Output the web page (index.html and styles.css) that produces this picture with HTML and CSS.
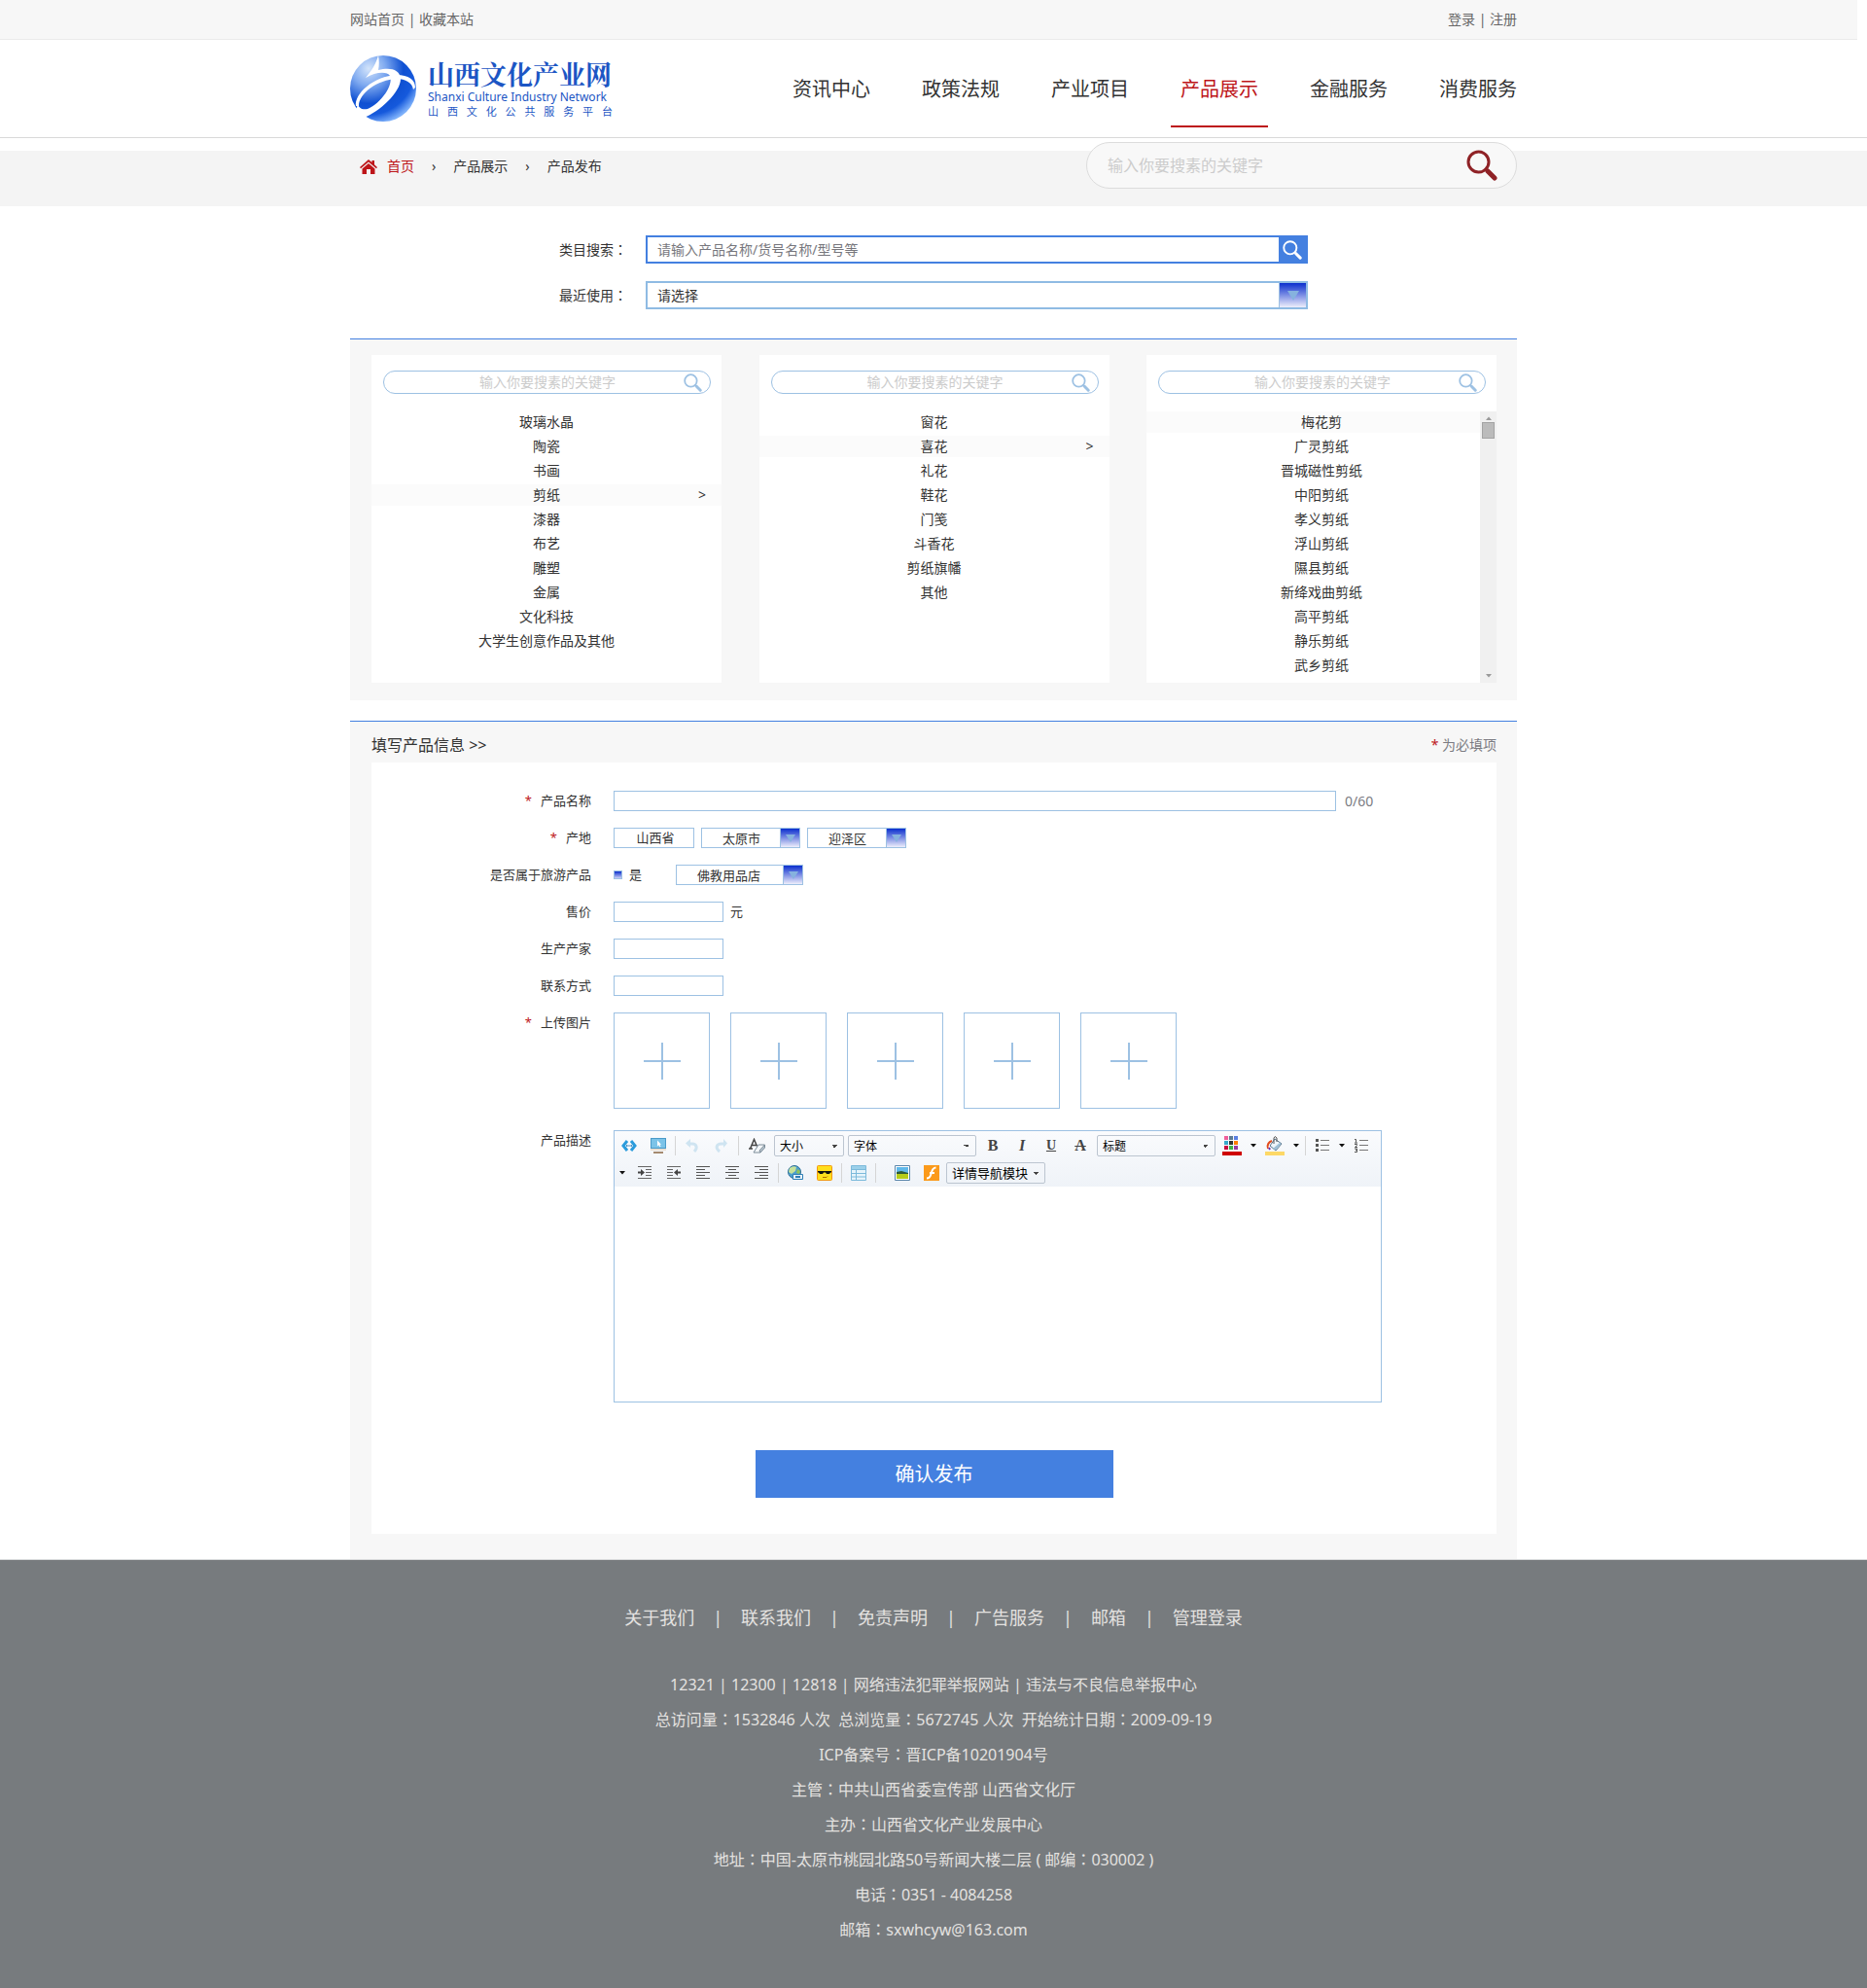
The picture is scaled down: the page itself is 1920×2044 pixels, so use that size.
FILE: index.html
```html
<!DOCTYPE html>
<html lang="zh-CN">
<head>
<meta charset="utf-8">
<meta name="viewport" content="width=device-width, initial-scale=1">
<title>产品发布 - 山西文化产业网</title>
<link rel="stylesheet" href="styles.css">
</head>
<body>
<svg width="0" height="0" class="sprite" aria-hidden="true">
  <symbol id="search" viewBox="0 0 32 32">
    <circle cx="12.500" cy="12.500" r="10.500" fill="none" stroke="currentColor" stroke-width="3"/>
    <path d="M22 22l7 7" stroke="currentColor" stroke-width="5" stroke-linecap="round"/>
    <path d="M19.500 19.500l3 3" stroke="currentColor" stroke-width="2"/>
  </symbol>
  <symbol id="caret" viewBox="0 0 6 4"><path d="M0 0h6L3 3.500z" fill="currentColor"/></symbol>
</svg>

<div class="topbar">
  <div class="container topbar-inner">
    <div><a href="#">网站首页</a> | <a href="#">收藏本站</a></div>
    <div><a href="#">登录</a> | <a href="#">注册</a></div>
  </div>
</div>

<header class="header">
  <div class="container header-inner">
    <a class="logo" href="#">
      <svg width="68" height="68" viewBox="0 0 68 68" aria-hidden="true">
        <defs>
          <radialGradient id="ball" cx="0.28" cy="0.2" r="0.85">
            <stop offset="0" stop-color="#d3e4fb"/>
            <stop offset="0.3" stop-color="#7faaf0"/>
            <stop offset="0.62" stop-color="#0f50d2"/>
            <stop offset="0.82" stop-color="#1559dc"/>
            <stop offset="1" stop-color="#7db0fa"/>
          </radialGradient>
        </defs>
        <circle cx="34" cy="34" r="34" fill="url(#ball)"/>
        <path d="M29 0C27 8 22 16 16 23C26 17 38 16 41 21C45 30 32 49 18 55C12 56 9 54 8 50C5 57 8 61 14 64C30 58 52 38 52 24C51 14 41 12 29 15C30 10 30 5 29 0Z" fill="#fff"/>
        <path d="M6 52C4 40 24 21 48 20C60 20 67 25 67 33L65 35C64 28 57 24 48 24C28 25 9 39 9 52Z" fill="#fff"/>
      </svg>
      <span class="logo-text">
        <strong>山西文化产业网</strong>
        <span class="logo-en">Shanxi Culture Industry Network</span>
        <span class="logo-sub">山西文化公共服务平台</span>
      </span>
    </a>
    <nav class="nav">
      <a href="#">资讯中心</a>
      <a href="#">政策法规</a>
      <a href="#">产业项目</a>
      <a href="#" class="active" aria-current="page">产品展示</a>
      <a href="#">金融服务</a>
      <a href="#">消费服务</a>
    </nav>
  </div>
</header>

<div class="crumbbar">
  <div class="container crumbbar-inner">
    <nav class="crumbs" aria-label="面包屑">
      <a href="#" class="home">
        <svg width="18" height="15" viewBox="0 0 18 15" aria-hidden="true"><path d="M9 0l3.500 3V1H15v4.300l3 2.700-1 1.200L9 2.400 1 9.200 0 8z" fill="currentColor"/><path d="M9 4l6.500 5.500V15h-4.500v-5H7v5H2.500V9.500z" fill="currentColor"/></svg>
        首页</a>
      <span>›</span>
      <a href="#">产品展示</a>
      <span>›</span>
      <a href="#">产品发布</a>
    </nav>
    <form class="site-search">
      <input type="text" placeholder="输入你要搜素的关键字" aria-label="站内搜索">
      <button type="button" aria-label="搜索"><svg width="32" height="32"><use href="#search"/></svg></button>
    </form>
  </div>
</div>

<main class="container">
  <form class="lookup">
    <div class="lookup-row">
      <label for="kw">类目搜索<span class="colon" lang="zh-TW">：</span></label>
      <div class="lookup-box strong">
        <input id="kw" type="text" placeholder="请输入产品名称/货号名称/型号等">
        <button type="button" aria-label="搜索"><svg width="20" height="20"><use href="#search"/></svg></button>
      </div>
    </div>
    <div class="lookup-row">
      <label for="recent">最近使用<span class="colon" lang="zh-TW">：</span></label>
      <div class="lookup-box drop">
        <select id="recent"><option>请选择</option></select>
      </div>
    </div>
  </form>

  <section class="picker">
    <div class="col">
      <div class="col-search">
        <input type="text" placeholder="输入你要搜素的关键字" aria-label="搜索一级类目">
        <button type="button" aria-label="搜索"><svg width="19" height="19"><use href="#search"/></svg></button>
      </div>
      <ul>
        <li><a href="#">玻璃水晶</a></li>
        <li><a href="#">陶瓷</a></li>
        <li><a href="#">书画</a></li>
        <li class="on"><a href="#">剪纸</a><span class="more">&gt;</span></li>
        <li><a href="#">漆器</a></li>
        <li><a href="#">布艺</a></li>
        <li><a href="#">雕塑</a></li>
        <li><a href="#">金属</a></li>
        <li><a href="#">文化科技</a></li>
        <li><a href="#">大学生创意作品及其他</a></li>
      </ul>
    </div>
    <div class="col">
      <div class="col-search">
        <input type="text" placeholder="输入你要搜素的关键字" aria-label="搜索二级类目">
        <button type="button" aria-label="搜索"><svg width="19" height="19"><use href="#search"/></svg></button>
      </div>
      <ul>
        <li><a href="#">窗花</a></li>
        <li class="on"><a href="#">喜花</a><span class="more">&gt;</span></li>
        <li><a href="#">礼花</a></li>
        <li><a href="#">鞋花</a></li>
        <li><a href="#">门笺</a></li>
        <li><a href="#">斗香花</a></li>
        <li><a href="#">剪纸旗幡</a></li>
        <li><a href="#">其他</a></li>
      </ul>
    </div>
    <div class="col">
      <div class="col-search">
        <input type="text" placeholder="输入你要搜素的关键字" aria-label="搜索三级类目">
        <button type="button" aria-label="搜索"><svg width="19" height="19"><use href="#search"/></svg></button>
      </div>
      <ul class="scrolled">
        <li class="on"><a href="#">梅花剪</a></li>
        <li><a href="#">广灵剪纸</a></li>
        <li><a href="#">晋城磁性剪纸</a></li>
        <li><a href="#">中阳剪纸</a></li>
        <li><a href="#">孝义剪纸</a></li>
        <li><a href="#">浮山剪纸</a></li>
        <li><a href="#">隰县剪纸</a></li>
        <li><a href="#">新绛戏曲剪纸</a></li>
        <li><a href="#">高平剪纸</a></li>
        <li><a href="#">静乐剪纸</a></li>
        <li><a href="#">武乡剪纸</a></li>
        <li class="scrollbar" aria-hidden="true">
          <svg class="up" width="6" height="4"><use href="#caret"/></svg>
          <i></i>
          <svg width="6" height="4"><use href="#caret"/></svg>
        </li>
      </ul>
    </div>
  </section>

  <section class="info">
    <div class="info-head">
      <h2>填写产品信息 &gt;&gt;</h2>
      <p><em>*</em> 为必填项</p>
    </div>
    <form class="sheet">
      <div class="row">
        <label class="name" for="pname"><em>*</em>产品名称</label>
        <div class="field"><input id="pname" class="long" type="text"><span class="count">0/60</span></div>
      </div>
      <div class="row">
        <label class="name" for="city"><em>*</em>产地</label>
        <div class="field">
          <input class="prov" type="text" value="山西省" aria-label="省">
          <span class="drop"><select id="city"><option>太原市</option></select></span>
          <span class="drop"><select aria-label="区"><option>迎泽区</option></select></span>
        </div>
      </div>
      <div class="row">
        <span class="name">是否属于旅游产品</span>
        <div class="field">
          <input id="tour" type="checkbox"><label for="tour">是</label>
          <span class="drop shop"><select aria-label="店铺类型"><option>佛教用品店</option></select></span>
        </div>
      </div>
      <div class="row">
        <label class="name" for="price">售价</label>
        <div class="field"><input id="price" class="short" type="text"><span>元</span></div>
      </div>
      <div class="row">
        <label class="name" for="maker">生产产家</label>
        <div class="field"><input id="maker" class="short" type="text"></div>
      </div>
      <div class="row">
        <label class="name" for="contact">联系方式</label>
        <div class="field"><input id="contact" class="short" type="text"></div>
      </div>
      <div class="row">
        <span class="name"><em>*</em>上传图片</span>
        <div class="uploads">
          <button type="button" aria-label="上传图片1"></button>
          <button type="button" aria-label="上传图片2"></button>
          <button type="button" aria-label="上传图片3"></button>
          <button type="button" aria-label="上传图片4"></button>
          <button type="button" aria-label="上传图片5"></button>
        </div>
      </div>
      <div class="row desc">
        <label class="name" for="detail">产品描述</label>
        <div class="editor">
          <div class="tools">
            <div class="tool-row">
              <button type="button" aria-label="源代码"><svg width="16" height="16" viewBox="0 0 16 16"><path d="M6 3L2 8l4 5M10 3l4 5-4 5" fill="none" stroke="#2a9bdc" stroke-width="3"/><path d="M5 8h1.500M7.500 8h1M9.500 8H11" stroke="#1a6fb0" stroke-width="1.500"/></svg></button>
              <button type="button" aria-label="预览"><svg width="16" height="16" viewBox="0 0 16 16"><path d="M0 0h16v11H0z" fill="#4b9bc9"/><path d="M1 1h14v9H1z" fill="#7cc3e8"/><path d="M7 2.500v6l1.500-1.200 1 2 1-.5-1-2H11z" fill="#fff"/><path d="M0 11h16v2H0z" fill="#eadfd2"/><path d="M3 14h10v2H3z" fill="#a58a70"/></svg></button>
              <span class="sep"></span>
              <button type="button" aria-label="撤销"><svg width="16" height="16" viewBox="0 0 16 16"><path d="M3 6h5c4 0 6 4 2 8" fill="none" stroke="#cfe4f1" stroke-width="3"/><path d="M6 1v9L1 5.500z" fill="#cfe4f1"/></svg></button>
              <button type="button" aria-label="重做"><svg width="16" height="16" viewBox="0 0 16 16"><path d="M12 6H8c-5 0-7 4-2 8" fill="none" stroke="#cfe4f1" stroke-width="3"/><path d="M10 1v9l4-4.500z" fill="#cfe4f1"/></svg></button>
              <span class="sep"></span>
              <button type="button" class="wide" aria-label="清除格式"><svg width="18" height="16" viewBox="0 0 18 16"><path d="M1.500 11L5.500 1.500l3 7M3 7.500h5M0 11h4" fill="none" stroke="#444" stroke-width="1.500"/><path d="M10 7h6.500L12 15H5z" fill="#f4f7f9" stroke="#7c8c99"/><path d="M16.500 7v3L12 15l-1-2z" fill="#b9c6cf" stroke="#7c8c99"/></svg></button>
              <select class="tsel size" aria-label="大小"><option>大小</option></select>
              <select class="tsel face" aria-label="字体"><option>字体</option></select>
              <button type="button" class="glyph"><b>B</b></button>
              <button type="button" class="glyph"><i>I</i></button>
              <button type="button" class="glyph"><u>U</u></button>
              <button type="button" class="glyph"><s>A</s></button>
              <select class="tsel heading" aria-label="标题"><option>标题</option></select>
              <button type="button" class="first-color" aria-label="文字颜色"><svg width="20" height="20" viewBox="0 0 20 20"><path d="M2 0h4v4H2z" fill="#ee5f9b"/><path d="M7 0h4v4H7z" fill="#5c7b92"/><path d="M12 0h4v4h-4z" fill="#5b80e0"/><path d="M2 5h4v4H2z" fill="#36aacb"/><path d="M7 5h4v4H7z" fill="#333"/><path d="M12 5h4v4h-4z" fill="#ff7d00"/><path d="M2 10h4v4H2z" fill="#c50b42"/><path d="M7 10h4v4H7z" fill="#3cb24a"/><path d="M12 10h4v4h-4z" fill="#9c3aa0"/><path d="M0 16h20v4H0z" fill="#cf0000"/></svg></button>
              <button type="button" class="tcaret" aria-label="更多颜色"><svg width="6" height="4"><use href="#caret"/></svg></button>
              <button type="button" aria-label="背景颜色"><svg width="20" height="20" viewBox="0 0 20 20"><path d="M3 13C1.500 9 4 6 7 5" fill="none" stroke="#e34b1c" stroke-width="2"/><path d="M4 12l1 2" stroke="#6a2fb0" stroke-width="2"/><path d="M10 3l7 5-6 7-6-5z" fill="#eef5fa" stroke="#56728a"/><path d="M8 13l7-6 1.500 1-5.500 6.500z" fill="#9dbfd6"/><path d="M9 8V2q1-3 3 0v4" fill="none" stroke="#555"/><path d="M0 16h20v4H0z" fill="#fdd866"/></svg></button>
              <button type="button" class="tcaret" aria-label="更多背景颜色"><svg width="6" height="4"><use href="#caret"/></svg></button>
              <span class="sep"></span>
              <button type="button" aria-label="无序列表"><svg width="14" height="14" viewBox="0 0 14 14"><path d="M0 0h3v3H0zM0 5h3v3H0zM0 10h3v3H0z" fill="#555"/><path d="M5 1.500h9M5 6.500h9M5 11.500h9" stroke="#777"/></svg></button>
              <button type="button" class="tcaret tight" aria-label="更多列表"><svg width="6" height="4"><use href="#caret"/></svg></button>
              <button type="button" aria-label="有序列表"><svg width="14" height="14" viewBox="0 0 14 14"><path d="M0 .5h1.500v3M0 4h3M0 5.500h2.500v1L.5 8.500H3M0 10h2.500v3.500H0M1 11.500h1.500" fill="none" stroke="#555"/><path d="M5 1.500h9M5 6.500h9M5 11.500h9" stroke="#777"/></svg></button>
            </div>
            <div class="tool-row">
              <button type="button" class="tcaret lead" aria-label="更多编号"><svg width="6" height="4"><use href="#caret"/></svg></button>
              <button type="button" aria-label="增加缩进"><svg width="14" height="14" viewBox="0 0 14 14"><path d="M0 .5h14M8 3.500h6M8 6.500h6M8 9.500h6M0 12.500h14" stroke="#666"/><path d="M0 5.500h3V3l4 3.500L3 10V7.500H0z" fill="#444"/></svg></button>
              <button type="button" aria-label="减少缩进"><svg width="14" height="14" viewBox="0 0 14 14"><path d="M0 .5h14M0 3.500h6M0 6.500h6M0 9.500h6M0 12.500h14" stroke="#666"/><path d="M14 5.500h-3V3L7 6.500l4 3.500V7.500h3z" fill="#444"/></svg></button>
              <button type="button" aria-label="左对齐"><svg width="14" height="14" viewBox="0 0 14 14"><path d="M0 .5h14M0 3.500h9M0 6.500h14M0 9.500h9M0 12.500h14" stroke="#555"/></svg></button>
              <button type="button" aria-label="居中"><svg width="14" height="14" viewBox="0 0 14 14"><path d="M0 .5h14M3 3.500h8M0 6.500h14M3 9.500h8M0 12.500h14" stroke="#555"/></svg></button>
              <button type="button" aria-label="右对齐"><svg width="14" height="14" viewBox="0 0 14 14"><path d="M0 .5h14M5 3.500h9M0 6.500h14M5 9.500h9M0 12.500h14" stroke="#555"/></svg></button>
              <span class="sep"></span>
              <button type="button" aria-label="链接"><svg width="16" height="16" viewBox="0 0 16 16"><circle cx="7" cy="7" r="6.500" fill="#4d9fcc" stroke="#2c6d98"/><path d="M2 3q4-3 7-1l-1 4-4 3-3-2z" fill="#c7e29a"/><path d="M10 4l3 2-1 3-3-1z" fill="#8fc45a"/><path d="M5.500 9.500h10v5h-10z" fill="#e8f3fa" stroke="#2f7fb5"/><path d="M8 12h5" stroke="#2f7fb5" stroke-width="2"/></svg></button>
              <button type="button" aria-label="表情"><svg width="16" height="16" viewBox="0 0 16 16"><rect x=".5" y=".5" width="15" height="15" rx="1" fill="#ffdf1c" stroke="#f29a12"/><path d="M1 6h14v1.500H14L13 9H10L9 7.500H7L6 9H3L2 7.500H1z" fill="#111"/><path d="M6 12.500h4l1-1" fill="none" stroke="#b06a00"/></svg></button>
              <span class="sep"></span>
              <button type="button" aria-label="表格"><svg width="16" height="16" viewBox="0 0 16 16"><path d="M.5.500h15v15H.5z" fill="#e6f4fb" stroke="#7cbadb"/><path d="M1 1h14v3H1z" fill="#9bd0ea"/><path d="M1 4.500h14M1 8.500h14M1 12h14M5.500 4v12" stroke="#7cbadb"/></svg></button>
              <span class="sep"></span>
              <button type="button" class="gap-left" aria-label="图片"><svg width="16" height="16" viewBox="0 0 16 16"><path d="M.5.500h15v15H.5z" fill="#fff" stroke="#5b86ab"/><path d="M2 2h12v6H2z" fill="#5fb8ea"/><path d="M2 7l5-1 7 2v2H2z" fill="#2d5a3a"/><path d="M2 9h12v5H2z" fill="#b5cc1a"/></svg></button>
              <button type="button" aria-label="动画"><svg width="16" height="16" viewBox="0 0 16 16"><path d="M0 0h16v16H0z" fill="#fb9a1b"/><path d="M12.500 2.500C8 2.500 8 8 7 10.500Q6 13.500 3 13.500M6 8h5" fill="none" stroke="#fff" stroke-width="2"/></svg></button>
              <select class="tsel module" aria-label="详情导航模块"><option>详情导航模块</option></select>
            </div>
          </div>
          <textarea id="detail"></textarea>
        </div>
      </div>
      <button type="button" class="submit">确认发布</button>
    </form>
  </section>
</main>

<footer class="footer">
  <nav class="foot-nav">
    <a href="#">关于我们</a><span>|</span><a href="#">联系我们</a><span>|</span><a href="#">免责声明</a><span>|</span><a href="#">广告服务</a><span>|</span><a href="#">邮箱</a><span>|</span><a href="#">管理登录</a>
  </nav>
  <p>12321 | 12300 | 12818 | 网络违法犯罪举报网站 | 违法与不良信息举报中心</p>
  <p>总访问量<span class="colon" lang="zh-TW">：</span>1532846 人次&nbsp; 总浏览量<span class="colon" lang="zh-TW">：</span>5672745 人次&nbsp; 开始统计日期<span class="colon" lang="zh-TW">：</span>2009-09-19</p>
  <p>ICP备案号<span class="colon" lang="zh-TW">：</span>晋ICP备10201904号</p>
  <p>主管<span class="colon" lang="zh-TW">：</span>中共山西省委宣传部 山西省文化厅</p>
  <p>主办<span class="colon" lang="zh-TW">：</span>山西省文化产业发展中心</p>
  <p>地址<span class="colon" lang="zh-TW">：</span>中国-太原市桃园北路50号新闻大楼二层 ( 邮编<span class="colon" lang="zh-TW">：</span>030002 )</p>
  <p>电话<span class="colon" lang="zh-TW">：</span>0351 - 4084258</p>
  <p>邮箱<span class="colon" lang="zh-TW">：</span>sxwhcyw@163.com</p>
</footer>
</body>
</html>
```
FILE: styles.css
```css
:root {
  --blue: #4480e0;
  --line: #9dc1e3;
  --red: #bd1519;
  --panel: #f7f7f7;
  --ink: #333;
}

* { box-sizing: border-box; }

body {
  margin: 0;
  background: #fff;
  color: var(--ink);
  font: 400 14px/22px "Noto Sans", "Noto Sans CJK SC", sans-serif;
}

a { color: inherit; text-decoration: none; }
em { color: var(--red); font-style: normal; }
p, h2, ul { margin: 0; padding: 0; list-style: none; }

input, select, button, textarea {
  margin: 0;
  padding: 0;
  border: 0;
  border-radius: 0;
  background: none;
  color: inherit;
  font: inherit;
  outline: 0;
  appearance: none;
}

button { display: flex; align-items: center; justify-content: center; cursor: pointer; }
.sprite { position: absolute; }
.container { width: 1200px; max-width: 100%; margin: 0 auto; }

/* Full-width colon centred in its em box */
.colon { font-family: "Noto Sans CJK TC", sans-serif; line-height: 1; }

/* Top bar */
.topbar {
  background:
    linear-gradient(#ebebeb, #ebebeb) left bottom / calc(100% - 10px) 1px no-repeat,
    linear-gradient(var(--panel), var(--panel)) left / calc(100% - 10px) 100% no-repeat;
  color: #666;
}
.topbar-inner { display: flex; justify-content: space-between; padding: 9px 0 10px; }

/* Header */
.header { border-bottom: 1px solid #d9d9d9; }
.header-inner { display: flex; justify-content: space-between; height: 100px; }
.logo { display: flex; align-items: center; gap: 12px; color: #1c56c4; }
.logo-text { display: flex; flex-direction: column; width: 190px; }
.logo-text strong {
  font: 700 27px/30px "Noto Serif CJK SC", "Noto Sans CJK SC", serif;
  white-space: nowrap;
}
.logo-en { font-size: 12px; line-height: 18px; white-space: nowrap; }
.logo-sub { font-size: 11px; line-height: 12px; text-align-last: justify; }

.nav { display: flex; align-items: flex-end; gap: 33px; margin-right: -10px; padding-bottom: 10px; }
.nav a {
  padding: 0 10px 24px;
  border-bottom: 2px solid transparent;
  font-size: 20px;
  line-height: 26px;
}
.nav .active { color: var(--red); border-color: var(--red); }

/* Breadcrumbs */
.crumbbar { margin-top: 13px; background: #f4f4f4; }
.crumbbar-inner { display: flex; justify-content: space-between; height: 57px; }
.crumbs { display: flex; align-items: center; gap: 18px; height: 22px; margin: 5px 0 0 10px; }
.home { display: flex; align-items: center; gap: 10px; color: var(--red); }
.site-search {
  display: flex;
  align-items: center;
  justify-content: space-between;
  width: 443px;
  height: 48px;
  margin-top: -9px;
  padding: 0 19px 0 21px;
  border: 1px solid #dcdcdc;
  border-radius: 24px;
  background: #f8f8f8;
  font-size: 16px;
}
.site-search input { flex: 1; }
.site-search button { color: #8f2226; }
::placeholder { color: #ccc; opacity: 1; }

/* Category lookup */
.lookup { display: grid; gap: 18px; padding: 30px 215px; }
.lookup-row { display: flex; align-items: center; }
.lookup-row label { width: 89px; }
.lookup-box { display: flex; flex: 1; height: 29px; border: 2px solid #8fbbe3; }
.lookup-box input, .lookup-box select { flex: 1; padding-left: 10px; }
.lookup-box ::placeholder { color: #77777d; }
.strong { border-color: var(--blue); }
.strong button { width: 28px; background: var(--blue); color: #fff; }

.drop { display: flex; position: relative; }
.drop select { flex: 1; }
.drop::before {
  content: "";
  width: 19px;
  order: 2;
  border-left: 1px solid var(--line);
  background: linear-gradient(#0b2fce, #eeeefb);
}
.drop::after {
  content: "";
  position: absolute;
  right: 4px;
  top: 6px;
  border: 5px solid transparent;
  border-top: 8px solid #86b2de;
  border-bottom: 0;
  pointer-events: none;
}
.lookup-box.drop::before { width: 27px; }
.lookup-box.drop::after { right: 7px; top: 8px; border-width: 10px 6px 0; }

/* Category picker */
.picker {
  display: flex;
  justify-content: space-between;
  padding: 16px 21px 18px 22px;
  border-top: 1px solid var(--blue);
  background: var(--panel);
}
.col { width: 360px; min-height: 337px; padding-top: 16px; background: #fff; }
.col-search {
  display: flex;
  height: 24px;
  margin: 0 11px 18px 12px;
  padding: 0 8px 0 28px;
  border: 1px solid var(--line);
  border-radius: 12px;
}
.col-search input { flex: 1; min-width: 0; text-align: center; }
.col-search button { color: var(--line); }
.col ul { display: grid; gap: 3px; position: relative; }
.col li { position: relative; height: 22px; text-align: center; }
.col .on { background: #fbfbfb; }
.col .more { position: absolute; right: 16px; }
.col .scrolled { height: 279px; align-content: start; }
.col .scrollbar {
  position: absolute;
  top: 0;
  right: 0;
  bottom: 0;
  display: flex;
  flex-direction: column;
  align-items: center;
  width: 17px;
  height: auto;
  padding: 5px 0;
  background: #f0f0f0;
  color: #999;
}
.scrollbar i { width: 13px; height: 17px; margin: 2px 0 auto; border: 1px solid #a3a3a3; background: #bbb; }
.up { transform: rotate(180deg); }

/* Product form */
.info {
  margin-top: 21px;
  padding: 0 21px 26px 22px;
  border-top: 1px solid var(--blue);
  background: var(--panel);
}
.info-head { display: flex; align-items: center; justify-content: space-between; height: 42px; padding-top: 5px; }
.info-head h2 { font-size: 16px; font-weight: inherit; }
.info-head p { color: #7b7b82; }
.sheet { padding: 29px 0 37px; background: #fff; font-size: 13px; line-height: 21px; }
.row { display: flex; gap: 23px; margin-bottom: 17px; }
.name { width: 226px; text-align: right; }
.name em { margin-right: 9px; }
.field { display: flex; gap: 7px; height: 21px; }
.field input, .field .drop { border: 1px solid var(--line); }
.field .long { width: 743px; }
.field .count { margin-left: 2px; color: #7b7b82; font-size: 14px; }
.field .prov { width: 83px; padding-left: 3px; text-align: center; }
.field .drop { width: 102px; }
.field .drop select { padding-left: 21px; }
.field .short { width: 113px; }
.field .shop { width: 131px; margin-left: 28px; }
.field [type="checkbox"] { align-self: center; width: 9px; height: 9px; background: linear-gradient(#0b2fce, #c9cff6); }

.uploads { display: flex; gap: 21px; }
.uploads button {
  width: 99px;
  height: 99px;
  border: 1px solid var(--line);
  background:
    linear-gradient(var(--line), var(--line)) center / 38px 2px no-repeat,
    linear-gradient(var(--line), var(--line)) center / 2px 38px no-repeat;
}

/* Rich text editor */
.desc { margin: 22px 0 49px; }
.editor { width: 790px; border: 1px solid var(--line); }
.tools { padding-top: 1px; background: linear-gradient(#fafbfd, #eff3f8); }
.tool-row { display: flex; align-items: center; height: 28px; }
.tool-row button { width: 30px; height: 22px; }
.tool-row .wide { width: 34px; }
.tool-row .tcaret { width: 14px; color: #111; }
.tool-row .tight { width: 10px; }
.tool-row .lead { width: 16px; }
.tool-row .gap-left { margin-left: 10px; }
.tool-row .first-color { margin-left: 2px; }
.sep { width: 5px; height: 20px; background: linear-gradient(#d5d5d5, #d5d5d5) center / 1px 100% no-repeat; }
.glyph { color: #444; font: 700 16px/22px "Liberation Serif", serif; }
.glyph u { font-size: 14px; }
.tsel {
  height: 22px;
  padding-left: 5px;
  border: 1px solid #bcc5d0;
  border-radius: 2px;
  background:
    linear-gradient(to bottom right, #444 50%, transparent 50%) right 6px center / 3px 3px no-repeat,
    linear-gradient(to bottom left, #444 50%, transparent 50%) right 9px center / 3px 3px no-repeat;
  color: #000;
  font-size: 12px;
}
.size { width: 72px; }
.face { width: 132px; margin: 0 2px 0 4px; }
.heading { width: 122px; margin-left: 2px; }
.module { width: 102px; font-size: 13px; }
.editor textarea { display: block; width: 100%; height: 221px; padding: 8px; resize: none; }

.submit {
  width: 368px;
  height: 49px;
  margin: 0 auto;
  background: var(--blue);
  color: #fff;
  font-size: 20px;
}

/* Footer */
.footer {
  padding: 41px 0 42px;
  border-top: 1px solid #d8dadb;
  background: #777b7e;
  color: #e4e2e0;
  font-size: 16px;
  line-height: 36px;
  text-align: center;
}
.foot-nav { display: flex; justify-content: center; gap: 19px; margin-bottom: 33px; font-size: 18px; }
```
